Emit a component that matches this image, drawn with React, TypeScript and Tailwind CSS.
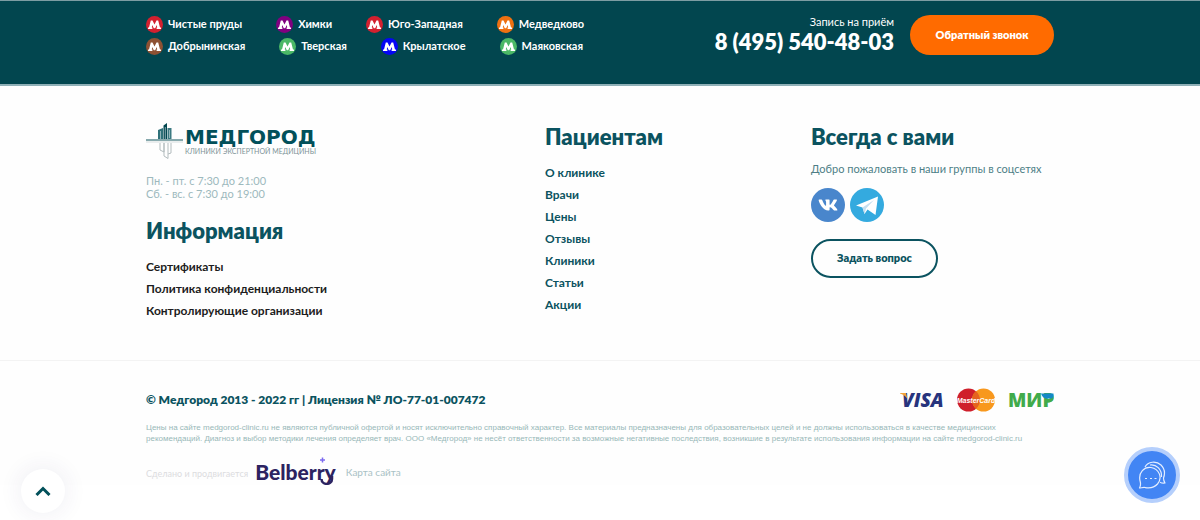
import { FaVk } from "react-icons/fa";

const metroRows = [
  [
    { name: "Чистые пруды", dot: "bg-[#d3202f]" },
    { name: "Химки", dot: "bg-[#800080]" },
    { name: "Юго-Западная", dot: "bg-[#d3202f]" },
    { name: "Медведково", dot: "bg-[#ee7011]" },
  ],
  [
    { name: "Добрынинская", dot: "bg-[#8d5133]" },
    { name: "Тверская", dot: "bg-[#4bb866]" },
    { name: "Крылатское", dot: "bg-[#0505f5]" },
    { name: "Маяковская", dot: "bg-[#4bb866]" },
  ],
];

const infoLinks = ["Сертификаты", "Политика конфиденциальности", "Контролирующие организации"];
const patientLinks = ["О клинике", "Врачи", "Цены", "Отзывы", "Клиники", "Статьи", "Акции"];

function MetroIcon({ dot }: { dot: string }) {
  return (
    <span className={`flex size-[17px] shrink-0 items-center justify-center rounded-full ${dot}`}>
      <svg viewBox="0 0 13 9" className="h-[9px] w-[13px] fill-white" aria-hidden="true">
        <path d="M0 9V7.500H1L2.800.5H4.500L6.500 4.600 8.500.5H10.200L12 7.500H13V9H8.600V7.500H9.200L8.800 5 7.200 8.300H5.800L4.200 5 3.800 7.500H4.400V9Z" />
      </svg>
    </span>
  );
}

function TopBar() {
  return (
    <header className="border-t border-b-2 border-t-[#7d9da3] border-b-[#8fb0b7] bg-[#02464f] text-white">
      <div className="mx-auto flex min-h-[83px] max-w-[908px] items-start justify-between pt-[14px]">
        <div className="flex flex-col gap-1">
          {metroRows.map((row, i) => (
            <ul key={i} className="flex gap-[34px]">
              {row.map((s) => (
                <li key={s.name} className="flex items-center gap-[5px] text-[11px] leading-[18px] font-bold">
                  <MetroIcon dot={s.dot} />
                  {s.name}
                </li>
              ))}
            </ul>
          ))}
        </div>
        <div className="flex items-start gap-4">
          <div className="text-right">
            <p className="text-[11px] leading-[14px]">Запись на приём</p>
            <a href="tel:+74955404803" className="block text-[22px] leading-[25px] font-extrabold">
              8 (495) 540-48-03
            </a>
          </div>
          <button type="button" className="h-10 w-36 rounded-full bg-[#ff6b00] text-[11px] font-extrabold">
            Обратный звонок
          </button>
        </div>
      </div>
    </header>
  );
}

function Logo() {
  return (
    <a href="#" className="flex h-9 items-start gap-[2px]">
      <svg viewBox="0 0 37 36" className="h-9 w-[37px] shrink-0" fill="none" aria-hidden="true">
        <path d="M0 17H37" stroke="#5f8c92" strokeWidth="1.500" />
        <path d="M0 19H37" stroke="#d5dcdd" />
        <path d="M12 16V7l5-2v11Z" fill="#2f7179" />
        <path d="M17.500 16V2.500L21 0V16Z" fill="#02464f" />
        <path d="M21.500 16V5h4v11Z" fill="#3c7a82" />
        <path d="M14.500 8v8M19.300 4v12M23.500 7v8" stroke="#a9c4c8" strokeWidth=".8" />
        <path d="M14 20v7l4 2v-9M18 20v13l4 2.500V20M22 31l3-1V20" stroke="#b3bcbe" />
      </svg>
      <span className="flex flex-col pt-1">
        <span className="font-['DejaVu_Sans',sans-serif] text-[20px] leading-[20px] font-bold text-[#02505a]">
          МЕДГОРОД
        </span>
        <span className="text-[7px] leading-[8px] whitespace-nowrap text-[#7d9297]">
          КЛИНИКИ ЭКСПЕРТНОЙ МЕДИЦИНЫ
        </span>
      </span>
    </a>
  );
}

function LinkList({ items }: { items: string[] }) {
  return (
    <ul className="mt-3">
      {items.map((item) => (
        <li key={item} className="text-[12px] leading-[22px] font-bold">
          <a href="#">{item}</a>
        </li>
      ))}
    </ul>
  );
}

function Heading({ children }: { children: string }) {
  return <h2 className="text-[22px] leading-[26px] font-extrabold text-[#0b5360]">{children}</h2>;
}

function Telegram() {
  return (
    <svg viewBox="0 0 34 34" className="size-[34px]" aria-hidden="true">
      <circle cx="17" cy="17" r="17" fill="#34aadf" />
      <path d="M6 17.500 28 8.500 25.500 27 17.500 21.500 14.500 26 12.500 19.500Z" fill="#fff" />
      <path d="M12.500 19.500 24 12 16 20.500 14.500 26Z" fill="#c5dff0" />
    </svg>
  );
}

function PaymentLogos() {
  return (
    <div className="flex items-center gap-3">
      <svg viewBox="0 0 44 28" className="h-7 w-11" role="img" aria-label="VISA">
        <text x="2" y="21" fontFamily="Open Sans, sans-serif" fontWeight="800" fontStyle="italic" fontSize="19" fill="#27347d">
          VISA
        </text>
        <path d="M0 7h6l1.500 6C6 10.500 3.500 8.500 0 7.500Z" fill="#f2a33a" />
      </svg>
      <svg viewBox="0 0 40 24" className="h-6 w-10" role="img" aria-label="MasterCard">
        <circle cx="12.500" cy="12" r="11.500" fill="#cf1f2b" />
        <circle cx="27.500" cy="12" r="11.500" fill="#f8981d" />
        <path d="M20 3.300a11.500 11.500 0 0 1 0 17.400a11.500 11.500 0 0 1 0-17.400Z" fill="#e5631f" />
        <text x="20" y="15" textAnchor="middle" fontFamily="Liberation Sans, sans-serif" fontWeight="700" fontStyle="italic" fontSize="7" fill="#fff">
          MasterCard
        </text>
      </svg>
      <svg viewBox="0 0 46 28" className="h-7 w-[46px]" role="img" aria-label="МИР">
        <text x="0" y="21" fontFamily="Open Sans, sans-serif" fontWeight="800" fontSize="19" fill="#41ab4b">
          МИР
        </text>
        <path d="M33 7.500H45.500C45.500 10 45 11 44 12.500H38C36 12.500 34 10.500 33 7.500Z" fill="#1488c6" />
        <path d="M37 13H45c-1 2.500-2.500 3.700-5 3.700H37Z" fill="#41ab4b" />
      </svg>
    </div>
  );
}

function Belberry() {
  return (
    <a href="#" className="relative block text-[21px] leading-[26px] font-black text-[#2c2361]">
      Belberry
      <svg viewBox="0 0 16 32" className="absolute -top-1 right-0 h-8 w-4" fill="none" aria-hidden="true">
        <path d="M0 5h5M2.500 2.500v5" stroke="#7d6cf0" strokeWidth="1.500" />
        <path d="M1.500 24c0 6.500 10.500 6.500 10.500 0V21" stroke="#2c2361" strokeWidth="2.500" />
      </svg>
    </a>
  );
}

export default function App() {
  return (
    <div className="bg-[#fefefe] font-[Lato,sans-serif] text-[#0b5360]">
      <TopBar />
      <footer>
        <div className="mx-auto grid min-h-[274px] max-w-[908px] grid-cols-[399fr_266fr_243fr] pt-[37px]">
          <section className="min-w-0">
            <Logo />
            <p className="mt-[15px] mb-[18px] text-[11px] leading-[13px] text-[#9db9bd]">
              Пн. - пт. с 7:30 до 21:00
              <br />
              Сб. - вс. с 7:30 до 19:00
            </p>
            <Heading>Информация</Heading>
            <div className="text-[#1c1c20]">
              <LinkList items={infoLinks} />
            </div>
          </section>
          <section className="pt-px">
            <Heading>Пациентам</Heading>
            <LinkList items={patientLinks} />
          </section>
          <section className="min-w-0 pt-px">
            <Heading>Всегда с вами</Heading>
            <p className="mt-3 text-[11px] leading-[14px] whitespace-nowrap text-[#4d7e86]">
              Добро пожаловать в наши группы в соцсетях
            </p>
            <div className="mt-3 flex gap-[5px]">
              <a href="#" aria-label="ВКонтакте" className="flex size-[34px] items-center justify-center rounded-full bg-[#4986cc] text-white">
                <FaVk className="size-5" />
              </a>
              <a href="#" aria-label="Telegram">
                <Telegram />
              </a>
            </div>
            <button type="button" className="mt-[17px] h-[39px] w-[127px] rounded-full border-2 border-[#0b5360] text-[11px] font-extrabold">
              Задать вопрос
            </button>
          </section>
        </div>
        <div className="border-t border-[#f3f3f3]">
          <div className="mx-auto flex max-w-[908px] flex-col pt-[25px]">
            <div className="flex h-7 items-center justify-between">
              <p className="text-[12px] font-extrabold">© Медгород 2013 - 2022 гг | Лицензия № ЛО-77-01-007472</p>
              <PaymentLogos />
            </div>
            <p className="mt-2 font-['Liberation_Sans',sans-serif] text-[8px] leading-[11px] text-[#98b8b8]">
              Цены на сайте medgorod-clinic.ru не являются публичной офертой и носят исключительно справочный характер.
              Все материалы предназначены для образовательных целей и не должны использоваться в качестве медицинских
              <br />
              рекомендаций. Диагноз и выбор методики лечения определяет врач. ООО «Медгород» не несёт ответственности за
              возможные негативные последствия, возникшие в результате использования информации на сайте
              medgorod-clinic.ru
            </p>
            <div className="mt-[15px] flex items-center">
              <span className="mr-[7px] pt-1 text-[9px] text-[#dcdcdf]">Сделано и продвигается</span>
              <Belberry />
              <a href="#" className="ml-[10px] text-[10px] text-[#a9c1c5]">
                Карта сайта
              </a>
            </div>
          </div>
        </div>
      </footer>
      <button type="button" aria-label="Наверх" className="fixed bottom-[7px] left-[21px] flex size-11 items-center justify-center rounded-full bg-white shadow-[0_0_24px_rgba(60,40,110,0.09)]">
        <svg viewBox="0 0 16 10" className="h-[10px] w-4" fill="none" aria-hidden="true">
          <path d="M1.500 9 8 2.500 14.500 9" stroke="#02505a" strokeWidth="3" />
        </svg>
      </button>
      <button type="button" aria-label="Чат" className="fixed right-5 bottom-[17px] flex size-14 items-center justify-center rounded-full border-4 border-[#b5cffc] bg-[#4285f4]">
        <svg viewBox="0 0 28 28" className="size-7" fill="none" stroke="#e4eeff" strokeWidth="1.200" strokeLinejoin="round" aria-hidden="true">
          <path d="M1.500 27c1-2 1.300-4 .8-6C-.5 11 7 5.500 13 6.500c8 1.500 12 10 6.500 16.500C15 28 10 27 7 26.500c-2-.3-4 .5-5.500.5Z" />
          <path d="M7 6C10 .5 18-.5 23 4c4 4 4 9 2.500 13 0 2 .5 3.500 1.500 5-1.700.3-3.500 0-5-.8" />
          <path d="M12 4c6-1 12 4 11.500 12" />
          <path d="M7 17.500h2M12 17.500h2M16.500 17.500h2" />
        </svg>
      </button>
    </div>
  );
}
